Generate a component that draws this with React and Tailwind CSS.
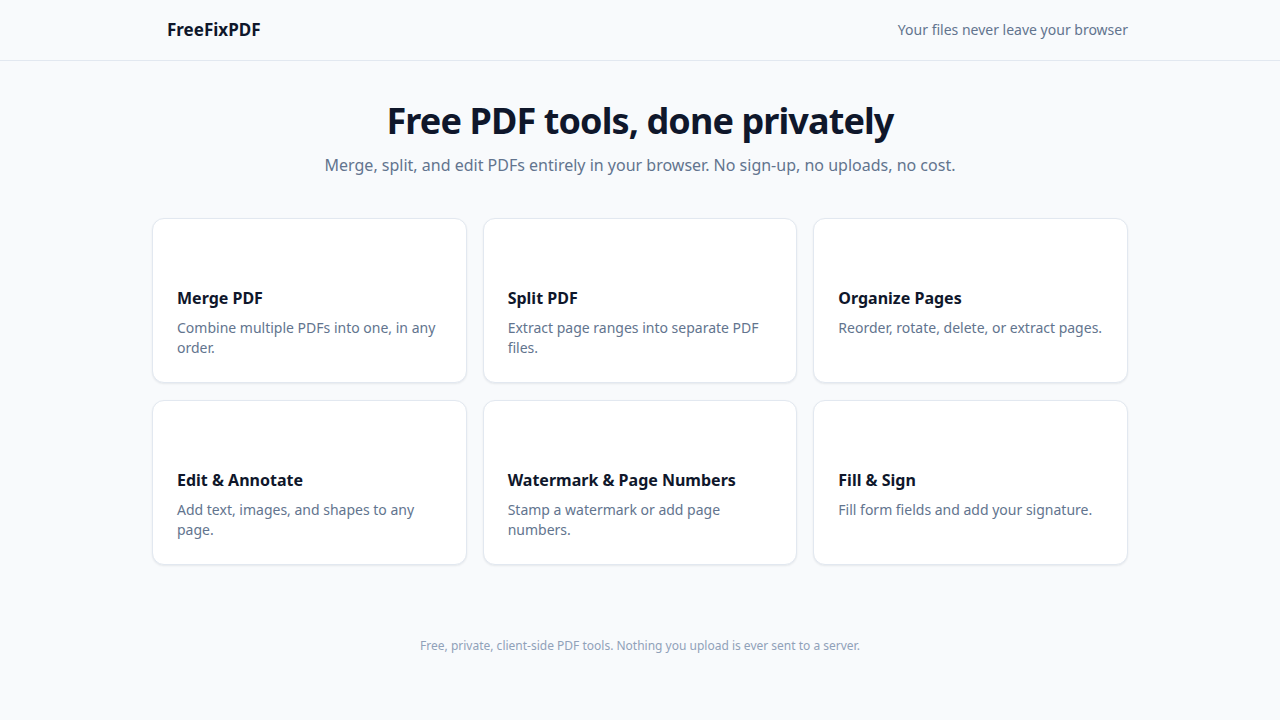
import React from 'react';

const tools = [
  { title: 'Merge PDF', desc: 'Combine multiple PDFs into one, in any order.' },
  { title: 'Split PDF', desc: 'Extract page ranges into separate PDF files.' },
  { title: 'Organize Pages', desc: 'Reorder, rotate, delete, or extract pages.' },
  { title: 'Edit & Annotate', desc: 'Add text, images, and shapes to any page.' },
  { title: 'Watermark & Page Numbers', desc: 'Stamp a watermark or add page numbers.' },
  { title: 'Fill & Sign', desc: 'Fill form fields and add your signature.' },
];

function ToolCard({ title, desc }) {
  return (
    <a href="#" className="block rounded-xl border border-slate-200 bg-white p-6 shadow-[0_1px_2px_rgba(15,23,42,0.08)]">
      <div className="h-[43px]" />
      <h2 className="text-base font-bold leading-6 text-slate-900">{title}</h2>
      <p className="mt-2 text-sm leading-5 text-slate-500">{desc}</p>
    </a>
  );
}

export default function App() {
  return (
    <div className="min-h-screen bg-slate-50 font-['Noto_Sans',sans-serif] text-slate-900">
      <header className="border-b border-slate-200">
        <div className="mx-auto flex h-[60px] max-w-[976px] items-center justify-between">
          <span className="pl-[15px] text-[17px] font-bold text-slate-900">FreeFixPDF</span>
          <span className="text-sm text-slate-500">Your files never leave your browser</span>
        </div>
      </header>

      <main className="mx-auto max-w-[976px] pt-10">
        <h1 className="text-center text-4xl font-bold leading-10 tracking-tight">Free PDF tools, done privately</h1>
        <p className="mt-3 text-center text-base leading-6 text-slate-500">
          Merge, split, and edit PDFs entirely in your browser. No sign-up, no uploads, no cost.
        </p>

        <div className="mt-[41px] grid grid-cols-3 gap-x-4 gap-y-[17px]">
          {tools.map((t) => (
            <ToolCard key={t.title} title={t.title} desc={t.desc} />
          ))}
        </div>
      </main>

      <footer className="pt-[73px] text-center text-xs leading-4 text-slate-400">
        Free, private, client-side PDF tools. Nothing you upload is ever sent to a server.
      </footer>
    </div>
  );
}
